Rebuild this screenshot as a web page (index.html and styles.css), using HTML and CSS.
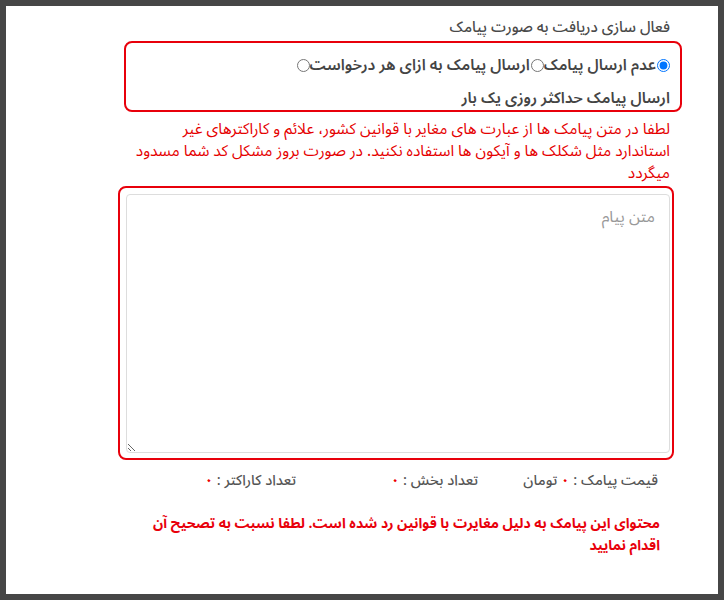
FILE: index.html
```html
<!DOCTYPE html>
<html lang="fa" dir="rtl">
<head>
  <meta charset="UTF-8" />
  <meta name="viewport" content="width=device-width, initial-scale=1.0" />
  <title>ارسال پیامک</title>
  <link rel="stylesheet" href="styles.css">
</head>
<body>
  <div class="panel">
    <div class="title">فعال سازی دریافت به صورت پیامک</div>
    <div class="mark options">
      <input type="radio" name="sms" id="r1" checked><label for="r1">عدم ارسال پیامک</label><input type="radio" name="sms" id="r2"><label for="r2">ارسال پیامک به ازای هر درخواست</label><input type="radio" name="sms" id="r3"><label for="r3">ارسال پیامک حداکثر روزی یک بار</label>
    </div>
    <p class="warning">لطفا در متن پیامک ها از عبارت های مغایر با قوانین کشور، علائم و کاراکترهای غیر استاندارد مثل شکلک ها و آیکون ها استفاده نکنید. در صورت بروز مشکل کد شما مسدود میگردد</p>
    <div class="mark message">
      <textarea placeholder="متن پیام"></textarea>
    </div>
    <div class="stats">
      <span>قیمت پیامک : <b>۰</b> تومان</span>
      <span>تعداد بخش : <b>۰</b></span>
      <span>تعداد کاراکتر : <b>۰</b></span>
    </div>
    <p class="rejected">محتوای این پیامک به دلیل مغایرت با قوانین رد شده است. لطفا نسبت به تصحیح آن اقدام نمایید</p>
  </div>
</body>
</html>
```

FILE: styles.css
```css
html, body { height: 100%; }
body {
  margin: 0;
  padding: 6px;
  box-sizing: border-box;
  background: #464646;
  font-family: "Noto Sans Arabic", "Noto Naskh Arabic", "DejaVu Sans", sans-serif;
}
.panel {
  background: #fff;
  height: 100%;
  box-sizing: border-box;
  padding: 9px 48px 0 0;
  direction: rtl;
}
.title {
  font-size: 15px;
  line-height: 24px;
  color: #4a4a4a;
  font-weight: 500;
}
.mark {
  border: 2px solid #e8000b;
  border-radius: 8px;
}
.options {
  display: flex;
  flex-wrap: wrap;
  align-items: center;
  row-gap: 11px;
  width: 544px;
  margin: 2px -12px 0 0;
  padding: 11px 10px 1px 0;
  font-size: 15.5px;
  font-weight: 600;
  line-height: 22px;
  color: #444;
}
.options input {
  margin: 0 0 0 1px;
}
.options label { white-space: nowrap; }
.warning {
  width: 540px;
  margin: 6px 0 0 0;
  font-size: 15.5px;
  line-height: 22px;
  color: #e50000;
}
.message {
  width: 544px;
  margin: 2px -4px 0 0;
  padding: 6px 2px 5px 6px;
}
.message textarea {
  display: block;
  width: 100%;
  height: 259px;
  box-sizing: border-box;
  border: 1px solid #ddd;
  border-radius: 4px;
  padding: 10px 14px;
  font: inherit;
  font-size: 16px;
  line-height: 24px;
  color: #333;
  resize: vertical;
}
.message textarea::placeholder { color: #999; }
.stats {
  display: grid;
  grid-template-columns: 180px 182px 180px;
  margin: 9px 12px 0 0;
  font-size: 14.5px;
  line-height: 24px;
  color: #555;
  font-weight: 500;
}
.stats b { color: #e00; font-weight: 700; }
.rejected {
  width: 530px;
  margin: 20px 10px 0 0;
  font-size: 14px;
  line-height: 22px;
  font-weight: 700;
  color: #e8000b;
}
```
